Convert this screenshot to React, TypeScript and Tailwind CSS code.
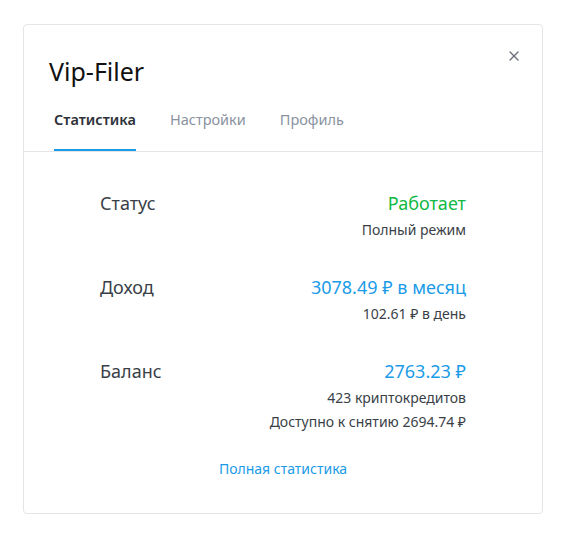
import { X } from "lucide-react";

const font = { fontFamily: '"Noto Sans", "Open Sans", sans-serif' };

function Row({
  label,
  value,
  valueClass,
  subs,
}: {
  label: string;
  value: string;
  valueClass: string;
  subs: string[];
}) {
  return (
    <div className="flex items-start justify-between">
      <span className="text-[18px] leading-[26px] text-[#3a3f47]">{label}</span>
      <div className="flex flex-col items-end">
        <span className={`text-[18px] leading-[26px] ${valueClass}`}>{value}</span>
        <div className="mt-[2px] flex flex-col items-end">
          {subs.map((s) => (
            <span key={s} className="text-[14px] leading-[24px] text-[#3a3f47]">
              {s}
            </span>
          ))}
        </div>
      </div>
    </div>
  );
}

export default function App() {
  return (
    <div className="min-h-[540px] bg-white pt-[24px] pl-[23px]" style={font}>
      <div className="w-[520px] rounded-[4px] border border-[#e3e5e8] bg-white">
        <div className="relative px-[25px] pt-[29px]">
          <h1 className="text-[25px] leading-[34px] text-[#111]">Vip-Filer</h1>
          <button
            type="button"
            className="absolute top-[23px] right-[20px] text-[#6b7079]"
          >
            <X size={16} strokeWidth={2} />
          </button>
          <div className="mt-[21px] flex gap-[34px] px-[5px]">
            <div className="border-b-2 border-[#1a9be8] pb-[20px] text-[14.5px] font-semibold leading-[20px] text-[#2d3138]">
              Статистика
            </div>
            <div className="pb-[20px] text-[14.5px] leading-[20px] text-[#8a93a0]">
              Настройки
            </div>
            <div className="pb-[20px] text-[14.5px] leading-[20px] text-[#8a93a0]">
              Профиль
            </div>
          </div>
        </div>
        <div className="border-t border-[#e3e5e8] px-[76px] pt-[38px] pb-[34px]">
          <div className="flex flex-col gap-[32px]">
            <Row
              label="Статус"
              value="Работает"
              valueClass="text-[#10b943]"
              subs={["Полный режим"]}
            />
            <Row
              label="Доход"
              value="3078.49 ₽ в месяц"
              valueClass="text-[#1a9be8]"
              subs={["102.61 ₽ в день"]}
            />
            <Row
              label="Баланс"
              value="2763.23 ₽"
              valueClass="text-[#1a9be8]"
              subs={["423 криптокредитов", "Доступно к снятию 2694.74 ₽"]}
            />
          </div>
          <div className="mt-[25px] text-center text-[14px] leading-[20px] text-[#1a9be8]">
            Полная статистика
          </div>
        </div>
      </div>
    </div>
  );
}
